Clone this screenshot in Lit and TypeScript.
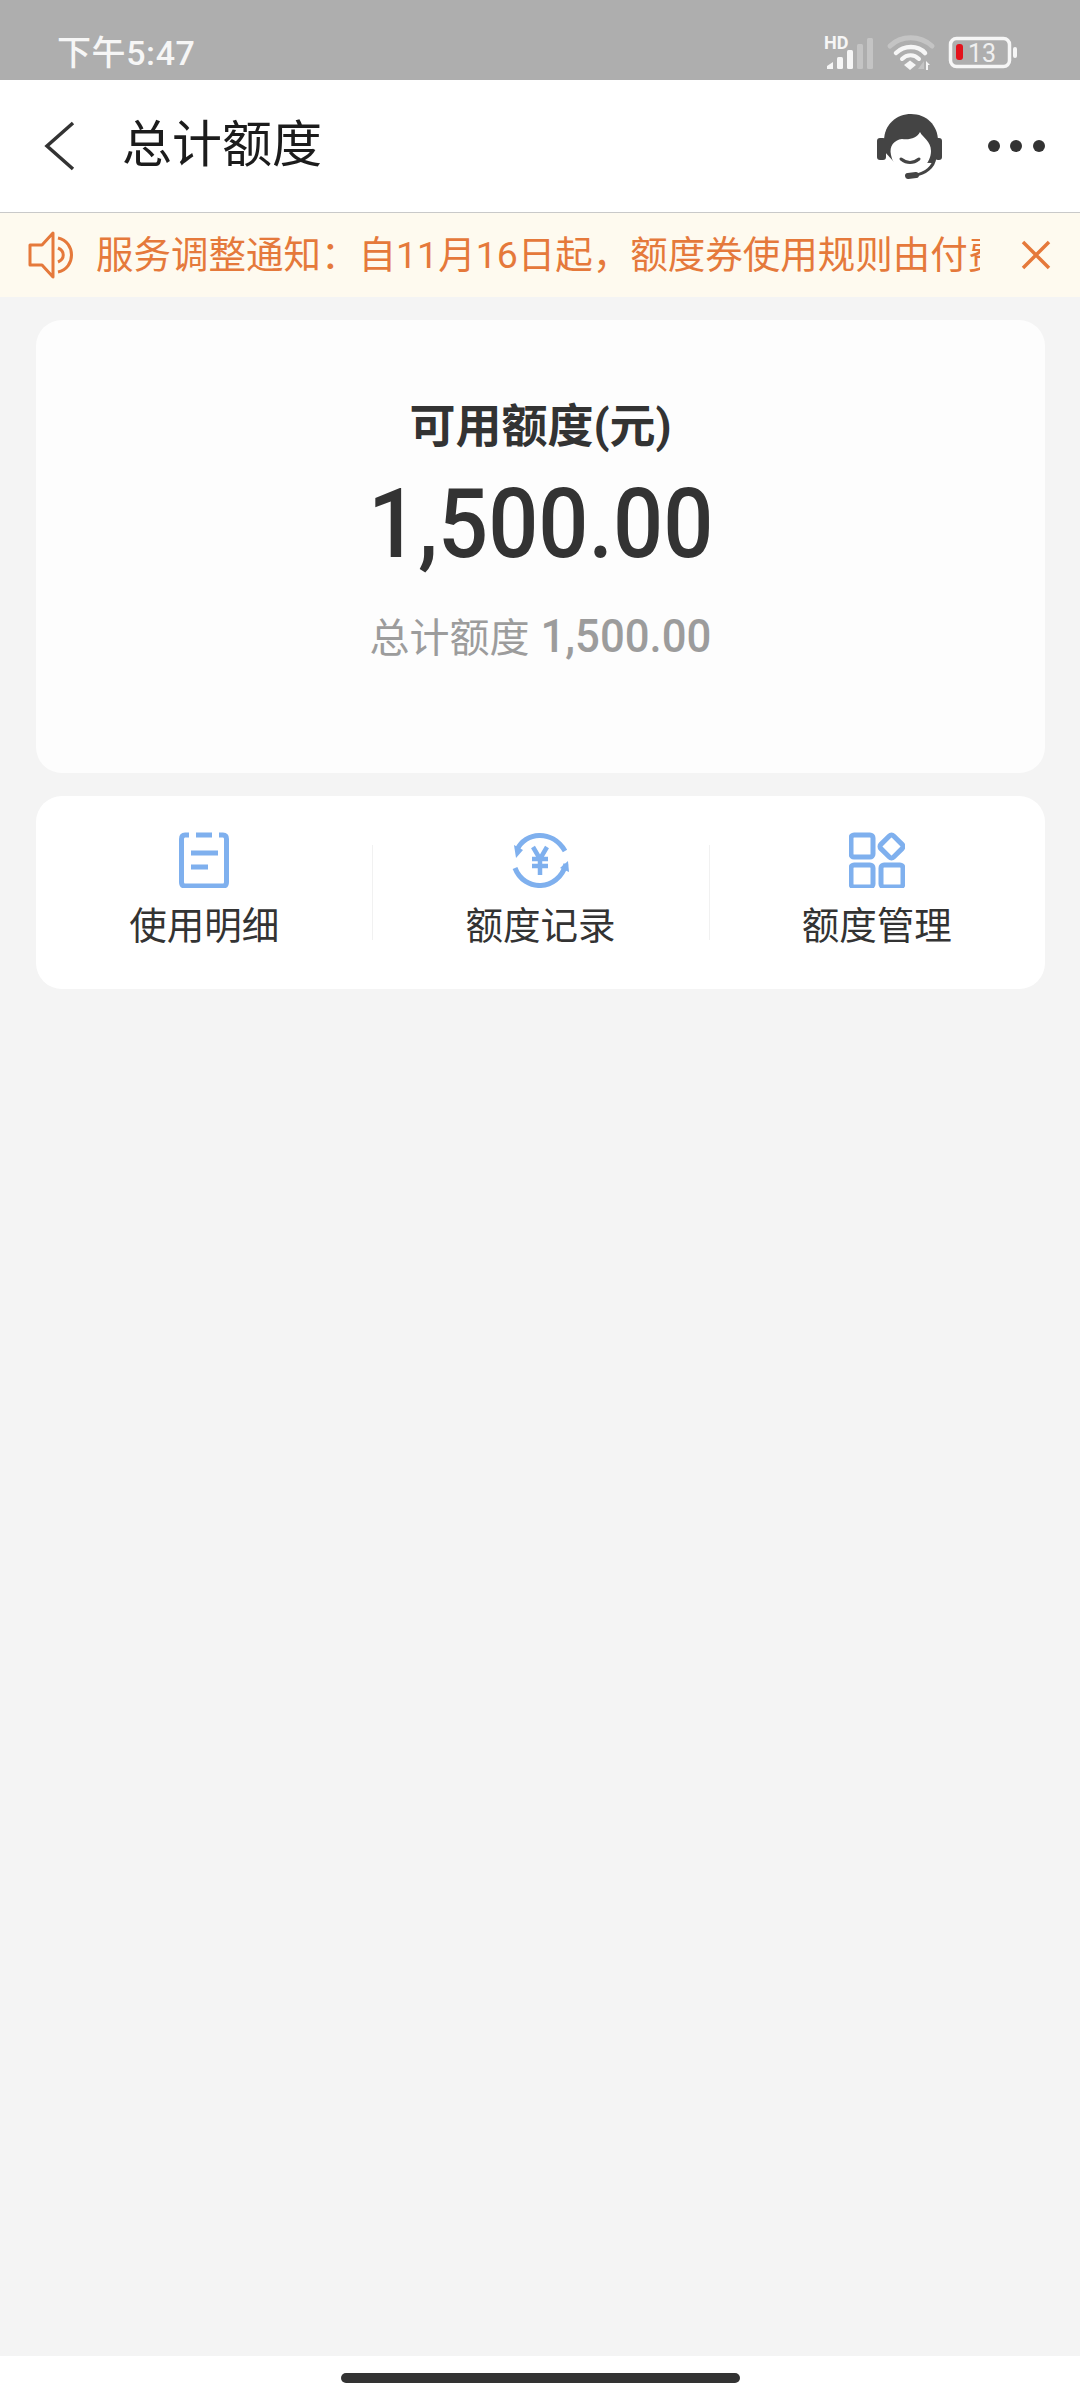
import { LitElement, html, css } from "lit";
import { customElement } from "lit/decorators.js";

const NOTICE = "服务调整通知\uFF1A自11月16日起\uFF0C额度券使用规则由付费用户调整";

@customElement("app-root")
export class AppRoot extends LitElement {
  static styles = css`
    :host {
      display: flex;
      flex-direction: column;
      width: 1080px;
      height: 2400px;
      background: #f4f4f4;
      font-family: Roboto, "Noto Sans CJK SC", sans-serif;
      overflow: hidden;
    }
    svg { display: block; flex: none; }
    .status {
      height: 80px;
      flex: none;
      background: #aeaeae;
      display: flex;
      align-items: flex-start;
      justify-content: space-between;
      padding: 0 62px 0 57px;
      box-sizing: border-box;
    }
    .time {
      color: #f6f6f6;
      font-size: 34px;
      line-height: 40px;
      font-weight: 500;
      margin-top: 33px;
      letter-spacing: 0.6px;
    }
    .sicons { margin-top: 30px; }
    .nav {
      height: 133px;
      flex: none;
      box-sizing: border-box;
      background: #fff;
      border-bottom: 1px solid #c9c9c9;
      display: flex;
      align-items: center;
      padding: 0 34px 0 44px;
    }
    .title {
      font-size: 50px;
      line-height: 60px;
      color: #1c1c1c;
      margin-left: 46px;
      flex: 1;
      margin-top: -2px;
    }
    .agent { margin-right: 36px; margin-top: -2px; }
    .notice {
      height: 84px;
      flex: none;
      background: #fefaef;
      display: flex;
      align-items: center;
      padding-left: 20px;
      color: #e5793b;
    }
    .ntext {
      width: 884px;
      margin-left: 6px;
      overflow: hidden;
      white-space: nowrap;
      font-size: 37.500px;
      line-height: 50px;
    }
    .nclose { margin-left: 41px; }
    .main {
      flex: 1;
      display: flex;
      flex-direction: column;
      gap: 23px;
      padding: 23px 35px 0 36px;
    }
    .card1 {
      height: 453px;
      flex: none;
      box-sizing: border-box;
      background: #fdfdfd;
      border-radius: 26px;
      display: flex;
      flex-direction: column;
      align-items: center;
      padding-top: 81px;
    }
    .h {
      font-size: 46px;
      line-height: 50px;
      font-weight: 700;
      color: #333;
    }
    .big {
      font-size: 96px;
      line-height: 90px;
      margin-top: 28px;
      color: #333;
      font-weight: 500;
      display: inline-block;
      transform: scaleX(0.92);
    }
    .sub {
      display: flex;
      align-items: baseline;
      margin-top: 44px;
      margin-left: 6px;
      color: #9c9c9c;
      line-height: 45px;
    }
    .sub .lbl { font-size: 40px; margin-right: 4px; }
    .sub .num {
      font-size: 47px;
      display: inline-block;
      font-weight: 500;
      transform: scaleX(0.93);
    }
    .card2 {
      height: 193px;
      flex: none;
      background: #fff;
      border-radius: 26px;
      display: grid;
      grid-template-columns: repeat(3, 1fr);
    }
    .act {
      display: flex;
      flex-direction: column;
      align-items: center;
      position: relative;
      padding-top: 36px;
    }
    .act + .act::before {
      content: "";
      position: absolute;
      left: 0;
      top: 49px;
      height: 95px;
      width: 1px;
      background: #f1f1f1;
    }
    .act span {
      font-size: 37.500px;
      line-height: 46px;
      color: #333;
      margin-top: 15px;
    }
    .home {
      height: 44px;
      flex: none;
      background: #fff;
      display: flex;
      justify-content: center;
      padding-top: 17px;
      box-sizing: border-box;
    }
    .pill {
      width: 399px;
      height: 10px;
      border-radius: 5px;
      background: #333;
    }
  `;

  render() {
    return html`
      <div class="status">
        <div class="time">下午5:47</div>
        <svg class="sicons" width="194" height="42" viewBox="825 30 194 42">
          <text x="825" y="49" font-size="18" font-weight="700" fill="#f6f6f6" font-family="Roboto, sans-serif">HD</text>
          <g fill="#f6f6f6">
            <path d="M828 69v-3l6-4v7z" />
            <rect x="838" y="57" width="6" height="12" rx="1.500" />
            <rect x="848" y="50" width="6" height="19" rx="1.500" />
          </g>
          <g fill="#c4c4c4">
            <rect x="858" y="44" width="6" height="25" rx="1.500" />
            <rect x="868" y="38" width="6" height="31" rx="1.500" />
          </g>
          <g fill="none" stroke-linecap="round">
            <path d="M891 46C902 35 921 35 933 46" stroke="#c4c4c4" stroke-width="5" />
            <path d="M897 53C905 45 919 45 926 53" stroke="#f6f6f6" stroke-width="4.500" />
            <path d="M903 59C908 54 915 54 920 59" stroke="#f6f6f6" stroke-width="4" />
          </g>
          <path d="M905 65l6-4.500 6 4.500-6 5z" fill="#f6f6f6" />
          <path d="M925 69v-8l-6 8z" fill="#c4c4c4" />
          <path d="M927 61l4 4h-2v5h-2z" fill="#f6f6f6" />
          <rect x="951.500" y="38.500" width="59" height="28" rx="6" fill="none" stroke="#f6f6f6" stroke-width="3.500" />
          <rect x="957" y="44" width="7" height="16" rx="3" fill="#e3121c" />
          <text x="969" y="62" font-size="25" fill="#f0f0f0" font-family="Roboto, sans-serif">13</text>
          <rect x="1014" y="47" width="4" height="11" rx="2" fill="#f6f6f6" />
        </svg>
      </div>
      <div class="nav">
        <svg width="32" height="50" viewBox="0 0 32 50">
          <path d="M29 2L3 25 29 48" fill="none" stroke="#333" stroke-width="3.500" />
        </svg>
        <div class="title">总计额度</div>
        <svg class="agent" width="80" height="80" viewBox="0 0 80 80">
          <path fill="#444" d="M14 36C14 19 27 9 41 9C56 9 68 20 68 36V50L62 58 24 57 14 46Z" />
          <rect x="7" y="33" width="9" height="22" rx="3" fill="#444" />
          <rect x="65" y="33" width="7" height="22" rx="3" fill="#444" />
          <path fill="#fff" d="M21 50C19 41 24 35 32 34C40 35 47 33 50 27C53 33 61 36 61 46C61 58 50 68 40 68C30 68 23 60 21 50Z" />
          <path d="M31 54Q40 61 49 54" fill="none" stroke="#444" stroke-width="3" stroke-linecap="round" />
          <path d="M65 52C64 62 55 69 45 70" fill="none" stroke="#444" stroke-width="3" />
          <path d="M38 71L46 70" fill="none" stroke="#444" stroke-width="6" stroke-linecap="round" />
        </svg>
        <svg width="60" height="16" viewBox="0 0 60 16">
          <circle cx="8" cy="8" r="6" fill="#333" />
          <circle cx="30" cy="8" r="6" fill="#333" />
          <circle cx="53" cy="8" r="6" fill="#333" />
        </svg>
      </div>
      <div class="notice">
        <svg width="70" height="64" viewBox="0 0 70 64">
          <path d="M10 22H22L33 10V54L22 42H10Z" fill="none" stroke="#e5793b" stroke-width="3" stroke-linejoin="round" />
          <path d="M38 15C56 19 56 45 38 49" fill="none" stroke="#e5793b" stroke-width="3" />
          <path d="M38 25C45 28 45 36 38 39" fill="none" stroke="#e5793b" stroke-width="3" />
        </svg>
        <div class="ntext">${NOTICE}</div>
        <svg class="nclose" width="30" height="30" viewBox="0 0 30 30">
          <path d="M2 2L28 28M28 2L2 28" fill="none" stroke="#e5793b" stroke-width="3.500" />
        </svg>
      </div>
      <div class="main">
        <div class="card1">
          <div class="h">可用额度(元)</div>
          <div class="big">1,500.00</div>
          <div class="sub"><span class="lbl">总计额度</span><span class="num">1,500.00</span></div>
        </div>
        <div class="card2">
          <div class="act">
            <svg width="50" height="56" viewBox="0 0 50 56">
              <path d="M10 3H6Q2.500 3 2.500 7V50Q2.500 54 6 54H44Q47.500 54 47.500 50V7Q47.500 3 44 3H40M17 3H33" fill="none" stroke="#7fb0ee" stroke-width="5" />
              <path d="M12 21H39M12 35H29" fill="none" stroke="#7fb0ee" stroke-width="5" />
            </svg>
            <span>使用明细</span>
          </div>
          <div class="act">
            <svg width="60" height="56" viewBox="10 12 60 56">
              <g fill="none" stroke="#7fb0ee" stroke-width="5">
                <path d="M17 30C25 12 52 9 65 31" />
                <path d="M15 48C24 72 58 72 66 44" />
                <path d="M33 27L40 39L47 27M32 39H48M32 46H48M40 39V55" stroke-width="4.500" />
              </g>
              <path d="M14 25L23 30L16 38Z" fill="#7fb0ee" />
              <path d="M68 41L69 52L60 48Z" fill="#7fb0ee" />
            </svg>
            <span>额度记录</span>
          </div>
          <div class="act">
            <svg width="56" height="56" viewBox="0 0 56 56">
              <g fill="none" stroke="#7fb0ee" stroke-width="5">
                <rect x="2" y="3" width="22" height="22" rx="3" />
                <rect x="2" y="33" width="22" height="22" rx="3" />
                <rect x="32" y="33" width="22" height="22" rx="3" />
                <rect x="33.500" y="5.500" width="18" height="18" rx="3" transform="rotate(45 42.500 14.500)" />
              </g>
            </svg>
            <span>额度管理</span>
          </div>
        </div>
      </div>
      <div class="home"><div class="pill"></div></div>
    `;
  }
}
